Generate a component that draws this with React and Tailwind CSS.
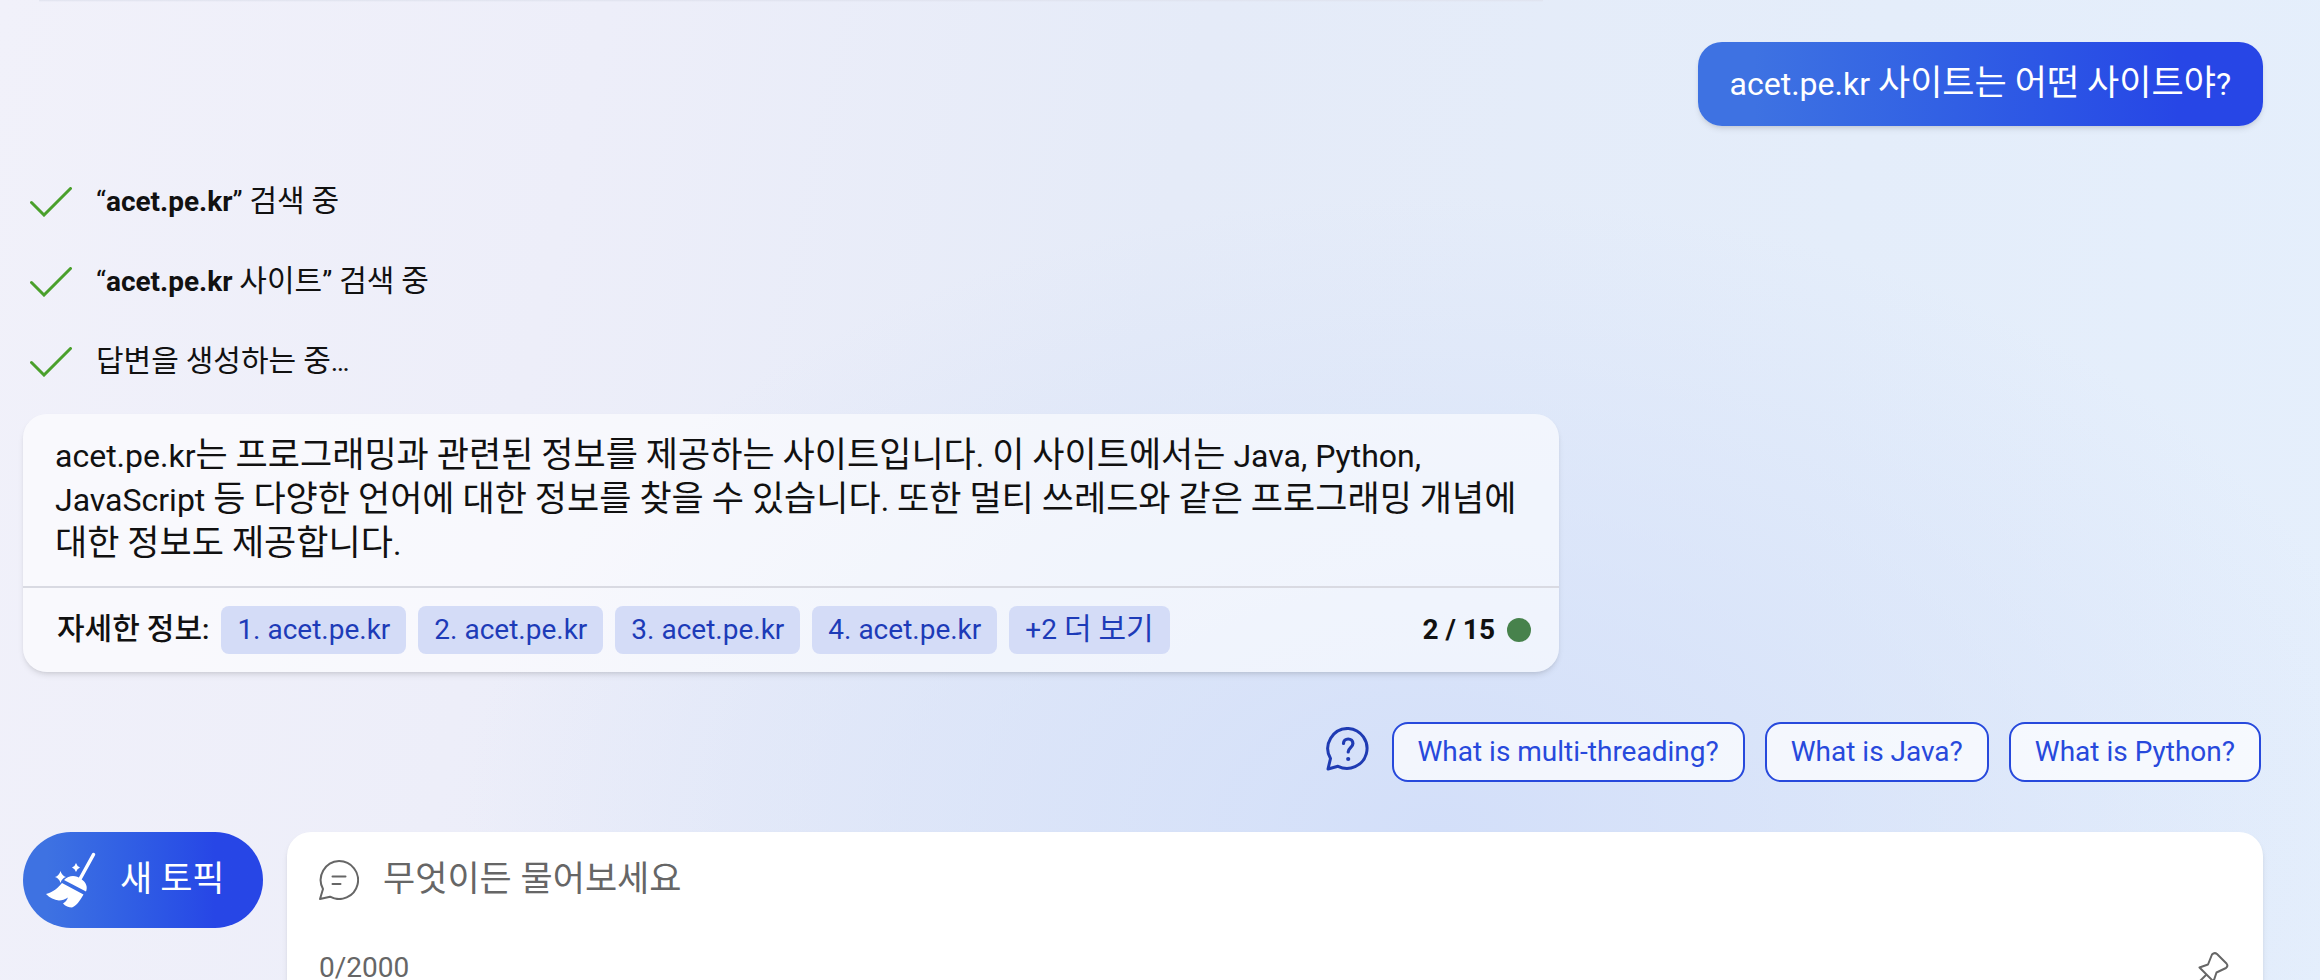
import React from 'react';

const searchSteps = [
  { id: 1, bold: 'acet.pe.kr', rest: '', tail: ' 검색 중' },
  { id: 2, bold: 'acet.pe.kr', rest: ' 사이트', tail: ' 검색 중' },
];

const sources = ['1. acet.pe.kr', '2. acet.pe.kr', '3. acet.pe.kr', '4. acet.pe.kr'];

const suggestions = ['What is multi-threading?', 'What is Java?', 'What is Python?'];

// Hangul is set a little larger than the Latin text beside it
const Mixed = ({ text, small }) =>
  text.split(/([가-힣]+)/).map((part, i) =>
    i % 2 === 1 ? (
      <span key={i} className={small ? 'text-[30px] leading-none' : 'text-[35px] leading-none'}>{part}</span>
    ) : (
      part
    )
  );

const CheckIcon = () => (
  <svg className="w-[42px] h-[30px] shrink-0" viewBox="0 0 42 30" fill="none" stroke="#4aa02c" strokeWidth="3" strokeLinecap="round" strokeLinejoin="miter" aria-hidden="true">
    <path d="M1.5 15.5 14 28 40.5 1.5" />
  </svg>
);

const QuestionBubbleIcon = () => (
  <svg className="w-11 h-11 mb-1.5 mr-0.5 shrink-0" viewBox="0 0 44 44" fill="none" stroke="#1f3bb3" strokeWidth="3" strokeLinecap="round" strokeLinejoin="round" aria-hidden="true">
    <path d="M22.500 1.500a20 20 0 1 1-10.500 37.800L2 42 4.500 31.500A20 20 0 0 1 22.500 1.500Z" />
    <path d="M17.500 16.500c0-2.800 2-4.500 4.700-4.500s4.700 1.800 4.700 4.500c0 4-4.700 4.300-4.700 8.500" strokeWidth="3.200" />
    <circle cx="22.200" cy="32" r="2.100" fill="#1f3bb3" stroke="none" />
  </svg>
);

const ChatBubbleIcon = () => (
  <svg className="w-10 h-10 shrink-0" viewBox="0 0 40 40" fill="none" stroke="#666" strokeWidth="2" strokeLinecap="round" strokeLinejoin="round" aria-hidden="true">
    <path d="M20 1a19 19 0 1 1-9 35.700L1 39l3-10A19 19 0 0 1 20 1Z" />
    <path d="M13.500 16.500h13M13.500 24h8" />
  </svg>
);

const BroomIcon = () => (
  <svg className="w-[50px] h-[56px] shrink-0" viewBox="0 0 50 56" fill="#fff" aria-hidden="true">
    <path d="M47.500 2.500 34 27" stroke="#fff" strokeWidth="3.500" strokeLinecap="round" />
    <path d="M18 28C23 23 30 23 35 27C40 30 42 35 40 39.500Z" />
    <path d="M16 31 37.500 42.500C34 49 30 54 26 55.500C23 55.500 19 54 17 51.500C19.500 50 21 48 22 45.500C19 47.500 16 48.500 13 48.500C8 48 4 46 0 42C7 40 12 36 16 31Z" />
    <path d="M14.500 19q1.300 4.700 5.500 6-4.200 1.300-5.500 6-1.300-4.700-5.500-6 4.200-1.300 5.500-6Z" />
    <path d="M30 11q1 3.500 4 4.500-3 1-4 4.500-1-3.500-4-4.500 3-1 4-4.500Z" />
  </svg>
);

const PinIcon = () => (
  <svg className="w-8 h-8" viewBox="0 0 32 32" fill="none" stroke="#666" strokeWidth="2" strokeLinecap="round" strokeLinejoin="round" aria-hidden="true">
    <path d="M15 2.500Q17.500 0 20 2L29.500 11.500Q31.500 14 29 16L19.500 20.500 16.500 29.500 2.500 15.500 11 12.500Z" />
    <path d="M9 23 1 31" />
  </svg>
);

const App = () => {
  return (
    <main className="h-screen overflow-hidden pl-[23px] pr-[57px] text-[#111] font-['Roboto','Noto_Sans_CJK_KR',sans-serif] bg-[radial-gradient(ellipse_42%_65%_at_62%_85%,#d3dff9_0%,transparent_100%),linear-gradient(102deg,#f1f1fa_0%,#edeef9_24%,#e5ebf8_48%,#e4edfa_75%,#e5effc_100%)]">
      {/* shadow of the previous message */}
      <div className="h-0.5 mx-4 max-w-[1504px] bg-linear-to-b from-[#dfe2ee] to-transparent" />

      <div className="mt-10 flex justify-end">
        <p className="px-8 py-5 rounded-3xl text-[32px] leading-[44px] text-white bg-linear-to-r from-[#3e72e2] from-10% to-[#2746e6] to-85% shadow-md">
          <Mixed text="acet.pe.kr 사이트는 어떤 사이트야?" />
        </p>
      </div>

      <ul className="mt-9 pl-[7px] text-[28px] leading-10">
        {searchSteps.map((step) => (
          <li key={step.id} className="h-20 flex items-center gap-6">
            <CheckIcon />
            <span>
              “<b>{step.bold}</b><Mixed text={step.rest} small />”<Mixed text={step.tail} small />
            </span>
          </li>
        ))}
        <li className="h-20 flex items-center gap-6">
          <CheckIcon />
          <span><Mixed text="답변을 생성하는 중…" small /></span>
        </li>
      </ul>

      <article className="mt-3 w-full max-w-[1536px] rounded-3xl bg-white/60 shadow-md">
        <p className="px-8 py-5 text-[32px] leading-[44px]">
          <Mixed text="acet.pe.kr는 프로그래밍과 관련된 정보를 제공하는 사이트입니다. 이 사이트에서는 Java, Python, JavaScript 등 다양한 언어에 대한 정보를 찾을 수 있습니다. 또한 멀티 쓰레드와 같은 프로그래밍 개념에 대한 정보도 제공합니다." />
        </p>
        <footer className="flex items-center gap-3 border-t-2 border-[#d9dae2] pl-[34px] pr-7 py-[18px] text-[28px] leading-[48px]">
          <span className="font-medium"><Mixed text="자세한 정보:" small /></span>
          {sources.map((source) => (
            <a key={source} href="#" className="px-4 rounded-lg bg-[#d4dcf7] text-[#1d3bb8]">{source}</a>
          ))}
          <button type="button" className="px-4 rounded-lg bg-[#d4dcf7] text-[#1d3bb8]">
            <Mixed text="+2 더 보기" small />
          </button>
          <span className="ml-auto font-bold">2 / 15</span>
          <span className="w-6 h-6 rounded-full bg-[#47824c]" />
        </footer>
      </article>

      <div className="mt-[50px] pr-0.5 flex justify-end items-center gap-5">
        <QuestionBubbleIcon />
        {suggestions.map((suggestion) => (
          <button key={suggestion} type="button" className="h-[60px] px-6 rounded-2xl border-2 border-[#2749dc] bg-white/70 text-[28px] text-[#2749dc]">
            {suggestion}
          </button>
        ))}
      </div>

      <div className="mt-[50px] flex items-start gap-6">
        <button type="button" className="h-24 w-60 pl-[23px] flex items-center gap-6 rounded-full text-white bg-linear-to-r from-[#3e72e2] from-10% to-[#2746e6] to-80%">
          <BroomIcon />
          <span className="text-[32px]"><Mixed text="새 토픽" /></span>
        </button>
        <form className="flex-1 px-8 pt-6 pb-8 rounded-3xl bg-white shadow-md">
          <label className="flex items-center gap-6">
            <ChatBubbleIcon />
            <input type="text" aria-label="무엇이든 물어보세요" placeholder="무엇이든 물어보세요" className="flex-1 h-12 text-[35px] placeholder:text-[#666] outline-none" />
          </label>
          <div className="mt-11 flex items-center justify-between text-[28px] leading-10 text-[#666]">
            <span>0/2000</span>
            <button type="button" aria-label="고정" className="mr-0.5"><PinIcon /></button>
          </div>
        </form>
      </div>
    </main>
  );
};

export default App;
